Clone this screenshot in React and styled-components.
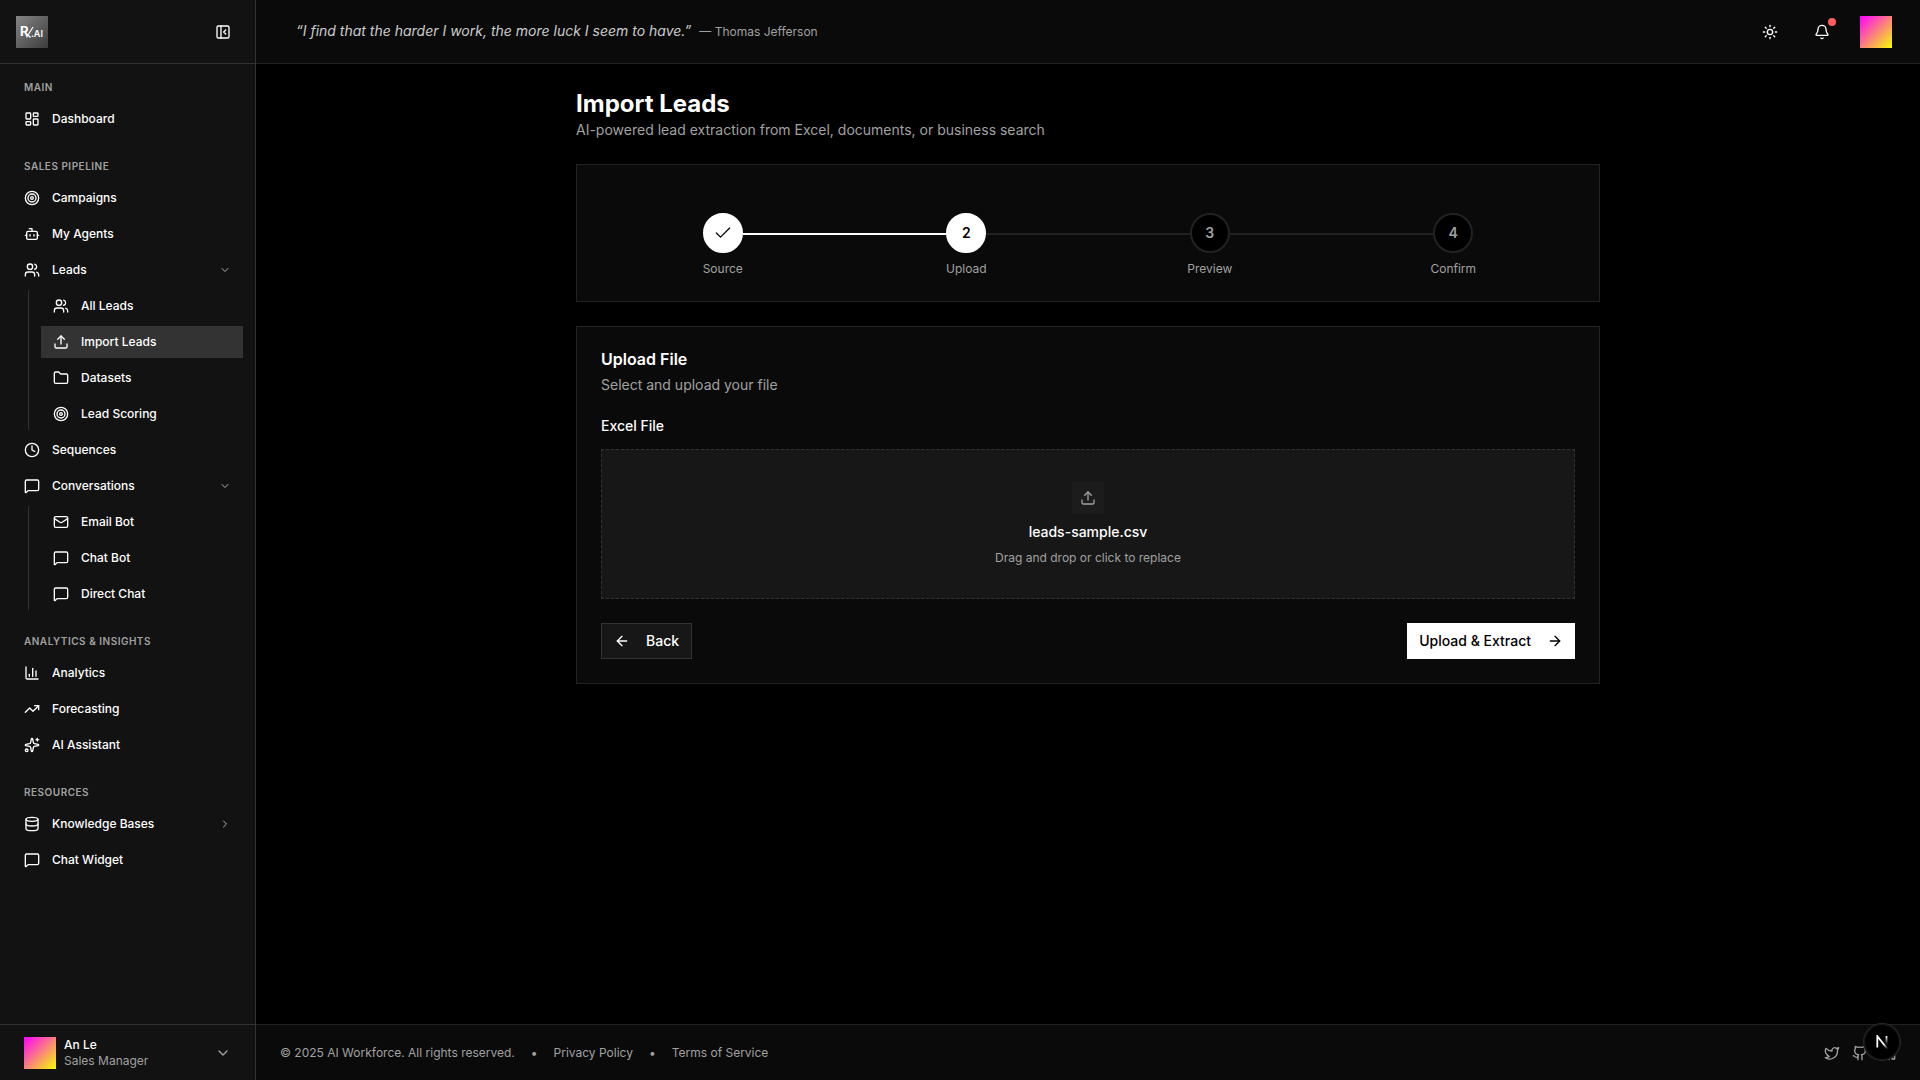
import React, { useState } from 'react';
import styled, { createGlobalStyle, css } from 'styled-components';
import {
  ArrowLeft,
  ArrowRight,
  Bell,
  Bot,
  ChartColumn,
  Check,
  ChevronDown,
  ChevronRight,
  Clock,
  Database,
  Folder,
  Github,
  LayoutDashboard,
  Linkedin,
  Mail,
  MessageSquare,
  PanelLeftClose,
  Sparkles,
  Sun,
  Target,
  TrendingUp,
  Twitter,
  Upload,
  Users,
} from 'lucide-react';

const GlobalStyle = createGlobalStyle`
  * {
    box-sizing: border-box;
  }
  body {
    margin: 0;
    background: #000;
    color: #fff;
    font-family: Inter, 'Liberation Sans', sans-serif;
    font-size: 14px;
    line-height: 20px;
  }
  a {
    color: inherit;
    text-decoration: none;
  }
  button {
    margin: 0;
    padding: 0;
    border: 0;
    background: none;
    color: inherit;
    font: inherit;
    cursor: pointer;
  }
  h1, h2, p, ul, ol {
    margin: 0;
    padding: 0;
  }
  ul, ol {
    list-style: none;
  }
  svg {
    display: block;
    flex-shrink: 0;
  }
`;

const Layout = styled.div`
  display: flex;
  min-height: 100vh;
`;

const Sidebar = styled.aside`
  display: flex;
  flex-direction: column;
  flex: 0 0 256px;
  background: #121212;
  border-right: 1px solid #333;
`;

const SidebarHeader = styled.div`
  display: flex;
  align-items: center;
  justify-content: space-between;
  height: 64px;
  padding: 0 24px 0 16px;
  border-bottom: 1px solid #333;
`;

const Nav = styled.nav`
  display: flex;
  flex-direction: column;
  flex: 1;
  gap: 16px;
  padding: 8px 12px;
`;

const GroupTitle = styled.h2`
  padding: 0 12px;
  color: #a1a1a1;
  font-size: 10px;
  font-weight: 600;
  line-height: 31px;
  letter-spacing: 0.5px;
  text-transform: uppercase;
`;

const NavList = styled.ul`
  display: flex;
  flex-direction: column;
  gap: 4px;
`;

const SubList = styled(NavList)`
  margin: 4px 0 0 16px;
  padding-left: 12px;
  border-left: 1px solid #333;
`;

const navRow = css`
  display: flex;
  align-items: center;
  gap: 12px;
  width: 100%;
  height: 32px;
  padding: 0 12px;
  font-size: 12px;
  font-weight: 500;
  line-height: 16px;
  text-align: left;
  background: ${(props) => (props.$active ? '#333' : 'transparent')};
  &:hover {
    background: #333;
  }
`;

const NavLink = styled.a`
  ${navRow}
`;

const NavToggle = styled.button`
  ${navRow}
  & > svg:last-child {
    margin-left: auto;
    color: #b3b3b3;
  }
`;

const UserMenu = styled.button`
  display: flex;
  align-items: center;
  gap: 8px;
  height: 56px;
  padding: 0 24px;
  border-top: 1px solid #333;
  text-align: left;
  font-size: 12px;
  line-height: 16px;
  & > svg {
    margin-left: auto;
    color: #a1a1a1;
  }
`;

const UserName = styled.div`
  font-weight: 500;
`;

const UserRole = styled.div`
  color: #a1a1a1;
`;

const Avatar = styled.div`
  width: 32px;
  height: 32px;
  background: linear-gradient(135deg, #ff00ff, #f5ff00);
`;

const Page = styled.div`
  display: flex;
  flex-direction: column;
  flex: 1;
  min-width: 0;
`;

const Header = styled.header`
  display: flex;
  align-items: center;
  justify-content: space-between;
  height: 64px;
  padding: 0 24px 0 40px;
  background: #0a0a0a;
  border-bottom: 1px solid #222;
`;

const Quote = styled.p`
  display: flex;
  align-items: baseline;
  gap: 8px;
  color: #ccc;
  font-style: italic;
`;

const Author = styled.span`
  color: #a1a1a1;
  font-size: 12px;
  font-style: normal;
`;

const Actions = styled.div`
  display: flex;
  align-items: center;
  gap: 16px;
`;

const IconButton = styled.button`
  position: relative;
  display: grid;
  place-items: center;
  width: ${(props) => props.$size || 36}px;
  height: ${(props) => props.$size || 36}px;
`;

const Dot = styled.span`
  position: absolute;
  top: 4px;
  right: 4px;
  width: 8px;
  height: 8px;
  border-radius: 50%;
  background: #ff5c5c;
`;

const Main = styled.main`
  display: flex;
  flex-direction: column;
  flex: 1;
  gap: 24px;
  width: 100%;
  max-width: 1072px;
  margin: 0 auto;
  padding: 24px;
`;

const Title = styled.h1`
  font-size: 24px;
  font-weight: 700;
  line-height: 32px;
`;

const Subtitle = styled.p`
  color: #a1a1a1;
`;

const Card = styled.section`
  padding: 24px;
  background: #0a0a0a;
  border: 1px solid #222;
`;

const Steps = styled.ol`
  display: grid;
  grid-template-columns: repeat(4, 1fr);
  padding-top: 24px;
`;

const StepTrack = styled.div`
  display: flex;
  align-items: flex-start;
`;

const StepLine = styled.span`
  flex: 1;
  height: 2px;
  margin-top: 20px;
  background: ${(props) =>
    props.$hidden ? 'transparent' : props.$done ? '#fff' : '#222'};
`;

const StepCircle = styled.span`
  display: grid;
  place-items: center;
  width: 40px;
  height: 40px;
  border: 2px solid ${(props) => (props.$filled ? '#fff' : '#222')};
  border-radius: 50%;
  background: ${(props) => (props.$filled ? '#fff' : '#000')};
  color: ${(props) => (props.$filled ? '#000' : '#a1a1a1')};
  font-weight: 600;
`;

const StepLabel = styled.p`
  margin-top: 8px;
  color: #a1a1a1;
  font-size: 12px;
  line-height: 16px;
  text-align: center;
`;

const CardTitle = styled.h2`
  font-size: 16px;
  font-weight: 600;
  line-height: 16px;
`;

const CardText = styled.p`
  margin-top: 8px;
  color: #a1a1a1;
`;

const FieldLabel = styled.label`
  display: block;
  margin: 24px 0 16px;
  font-weight: 500;
  line-height: 14px;
`;

const FileInput = styled.input`
  position: absolute;
  width: 1px;
  height: 1px;
  opacity: 0;
`;

const Dropzone = styled.label`
  display: flex;
  flex-direction: column;
  align-items: center;
  gap: 8px;
  padding: 32px;
  background: #171717;
  border: 1px dashed #333;
  cursor: pointer;
`;

const DropIcon = styled.span`
  display: grid;
  place-items: center;
  width: 32px;
  height: 32px;
  background: #1c1c1c;
  color: #a1a1a1;
`;

const FileName = styled.span`
  font-weight: 500;
`;

const Hint = styled.span`
  color: #a1a1a1;
  font-size: 12px;
  line-height: 16px;
`;

const ButtonRow = styled.div`
  display: flex;
  justify-content: space-between;
  margin-top: 24px;
`;

const Button = styled.button`
  display: flex;
  align-items: center;
  gap: 16px;
  height: 36px;
  padding: 0 12px;
  font-weight: 500;
  ${(props) =>
    props.$primary
      ? css`
          background: #fff;
          color: #000;
        `
      : css`
          background: #171717;
          border: 1px solid #333;
        `}
`;

const Footer = styled.footer`
  display: flex;
  align-items: center;
  justify-content: space-between;
  height: 56px;
  padding: 0 24px;
  background: #0a0a0a;
  border-top: 1px solid #222;
  color: #a1a1a1;
  font-size: 12px;
  line-height: 16px;
`;

const FooterLinks = styled.div`
  display: flex;
  gap: 16px;
`;

const Socials = styled.div`
  display: flex;
  gap: 12px;
`;

const DevButton = styled.button`
  position: fixed;
  right: 20px;
  bottom: 20px;
  display: grid;
  place-items: center;
  width: 36px;
  height: 36px;
  border-radius: 50%;
  background: #000;
  box-shadow: 0 0 0 1px #2a2a2a, inset 0 0 0 1px #1a1a1a;
`;

const navGroups = [
  {
    title: 'Main',
    items: [{ label: 'Dashboard', icon: LayoutDashboard }],
  },
  {
    title: 'Sales Pipeline',
    items: [
      { label: 'Campaigns', icon: Target },
      { label: 'My Agents', icon: Bot },
      {
        label: 'Leads',
        icon: Users,
        open: true,
        children: [
          { label: 'All Leads', icon: Users },
          { label: 'Import Leads', icon: Upload, active: true },
          { label: 'Datasets', icon: Folder },
          { label: 'Lead Scoring', icon: Target },
        ],
      },
      { label: 'Sequences', icon: Clock },
      {
        label: 'Conversations',
        icon: MessageSquare,
        open: true,
        children: [
          { label: 'Email Bot', icon: Mail },
          { label: 'Chat Bot', icon: MessageSquare },
          { label: 'Direct Chat', icon: MessageSquare },
        ],
      },
    ],
  },
  {
    title: 'Analytics & Insights',
    items: [
      { label: 'Analytics', icon: ChartColumn },
      { label: 'Forecasting', icon: TrendingUp },
      { label: 'AI Assistant', icon: Sparkles },
    ],
  },
  {
    title: 'Resources',
    items: [
      { label: 'Knowledge Bases', icon: Database, children: [] },
      { label: 'Chat Widget', icon: MessageSquare },
    ],
  },
];

const steps = ['Source', 'Upload', 'Preview', 'Confirm'];
const currentStep = 1;

const Logo = () => (
  <svg width="32" height="32" viewBox="0 0 32 32" role="img" aria-label="RX.AI">
    <defs>
      <linearGradient id="logo-bg" x1="0" y1="0" x2="1" y2="1">
        <stop offset="0" stopColor="#858585" />
        <stop offset="1" stopColor="#3c3c3c" />
      </linearGradient>
    </defs>
    <rect width="32" height="32" fill="url(#logo-bg)" />
    <g fill="#fff" fontFamily="Inter, sans-serif">
      <text x="4" y="20" fontSize="13" fontWeight="700">
        R
      </text>
      <text x="15" y="21" fontSize="9" fontWeight="600">
        .AI
      </text>
    </g>
    <path
      d="M17 11 10.5 21.5M11 18l3.5 3.5"
      stroke="#fff"
      strokeWidth="1.2"
      fill="none"
    />
  </svg>
);

const NextLogo = () => (
  <svg width="14" height="14" viewBox="0 0 14 14" fill="none">
    <defs>
      <linearGradient
        id="n-diagonal"
        x1="9"
        y1="9"
        x2="12.5"
        y2="14"
        gradientUnits="userSpaceOnUse"
      >
        <stop stopColor="#fff" />
        <stop offset="1" stopColor="#fff" stopOpacity="0" />
      </linearGradient>
      <linearGradient
        id="n-stem"
        x1="11"
        y1="1"
        x2="11"
        y2="10"
        gradientUnits="userSpaceOnUse"
      >
        <stop stopColor="#fff" />
        <stop offset="1" stopColor="#fff" stopOpacity="0" />
      </linearGradient>
    </defs>
    <path d="M12.5 14 2.3 1.2V12.6" stroke="url(#n-diagonal)" strokeWidth="1.8" />
    <path d="M11.5 1V11" stroke="url(#n-stem)" strokeWidth="1.8" />
  </svg>
);

const NavItem = ({ item }) => {
  const [open, setOpen] = useState(Boolean(item.open));
  const Icon = item.icon;

  if (!item.children) {
    return (
      <li>
        <NavLink
          href="#"
          $active={item.active}
          aria-current={item.active ? 'page' : undefined}
        >
          <Icon size={16} />
          {item.label}
        </NavLink>
      </li>
    );
  }

  return (
    <li>
      <NavToggle
        type="button"
        aria-expanded={open}
        onClick={() => setOpen(!open)}
      >
        <Icon size={16} />
        {item.label}
        {open ? <ChevronDown size={12} /> : <ChevronRight size={12} />}
      </NavToggle>
      {open && item.children.length > 0 && (
        <SubList>
          {item.children.map((child) => (
            <NavItem key={child.label} item={child} />
          ))}
        </SubList>
      )}
    </li>
  );
};

const Stepper = () => (
  <Steps>
    {steps.map((step, idx) => (
      <li key={step} aria-current={idx === currentStep ? 'step' : undefined}>
        <StepTrack>
          <StepLine $hidden={idx === 0} $done={idx <= currentStep} />
          <StepCircle $filled={idx <= currentStep}>
            {idx < currentStep ? <Check size={20} strokeWidth={1.5} /> : idx + 1}
          </StepCircle>
          <StepLine
            $hidden={idx === steps.length - 1}
            $done={idx < currentStep}
          />
        </StepTrack>
        <StepLabel>{step}</StepLabel>
      </li>
    ))}
  </Steps>
);

const App = () => {
  const [fileName, setFileName] = useState('leads-sample.csv');

  const handleChange = (e) => {
    if (e.target.files.length) setFileName(e.target.files[0].name);
  };

  return (
    <>
      <GlobalStyle />
      <Layout>
        <Sidebar>
          <SidebarHeader>
            <Logo />
            <IconButton type="button" $size={16} aria-label="Collapse sidebar">
              <PanelLeftClose size={16} />
            </IconButton>
          </SidebarHeader>
          <Nav>
            {navGroups.map((group) => (
              <div key={group.title}>
                <GroupTitle>{group.title}</GroupTitle>
                <NavList>
                  {group.items.map((item) => (
                    <NavItem key={item.label} item={item} />
                  ))}
                </NavList>
              </div>
            ))}
          </Nav>
          <UserMenu type="button">
            <Avatar />
            <div>
              <UserName>An Le</UserName>
              <UserRole>Sales Manager</UserRole>
            </div>
            <ChevronDown size={16} />
          </UserMenu>
        </Sidebar>
        <Page>
          <Header>
            <Quote>
              “I find that the harder I work, the more luck I seem to have.”
              <Author>— Thomas Jefferson</Author>
            </Quote>
            <Actions>
              <IconButton type="button" aria-label="Toggle theme">
                <Sun size={16} />
              </IconButton>
              <IconButton type="button" aria-label="Notifications">
                <Bell size={16} />
                <Dot />
              </IconButton>
              <IconButton type="button" $size={40} aria-label="Account">
                <Avatar />
              </IconButton>
            </Actions>
          </Header>
          <Main>
            <div>
              <Title>Import Leads</Title>
              <Subtitle>
                AI-powered lead extraction from Excel, documents, or business
                search
              </Subtitle>
            </div>
            <Card>
              <Stepper />
            </Card>
            <Card>
              <CardTitle>Upload File</CardTitle>
              <CardText>Select and upload your file</CardText>
              <FieldLabel htmlFor="lead-file">Excel File</FieldLabel>
              <FileInput id="lead-file" type="file" onChange={handleChange} />
              <Dropzone htmlFor="lead-file">
                <DropIcon>
                  <Upload size={16} />
                </DropIcon>
                <FileName>{fileName}</FileName>
                <Hint>Drag and drop or click to replace</Hint>
              </Dropzone>
              <ButtonRow>
                <Button type="button">
                  <ArrowLeft size={16} />
                  Back
                </Button>
                <Button type="button" $primary>
                  Upload &amp; Extract
                  <ArrowRight size={16} />
                </Button>
              </ButtonRow>
            </Card>
          </Main>
          <Footer>
            <FooterLinks>
              <span>© 2025 AI Workforce. All rights reserved.</span>
              <span>•</span>
              <a href="#">Privacy Policy</a>
              <span>•</span>
              <a href="#">Terms of Service</a>
            </FooterLinks>
            <Socials>
              <a href="#" aria-label="Twitter">
                <Twitter size={16} />
              </a>
              <a href="#" aria-label="GitHub">
                <Github size={16} />
              </a>
              <a href="#" aria-label="LinkedIn">
                <Linkedin size={16} />
              </a>
            </Socials>
          </Footer>
        </Page>
      </Layout>
      <DevButton type="button" aria-label="Open Next.js dev tools">
        <NextLogo />
      </DevButton>
    </>
  );
};

export default App;
